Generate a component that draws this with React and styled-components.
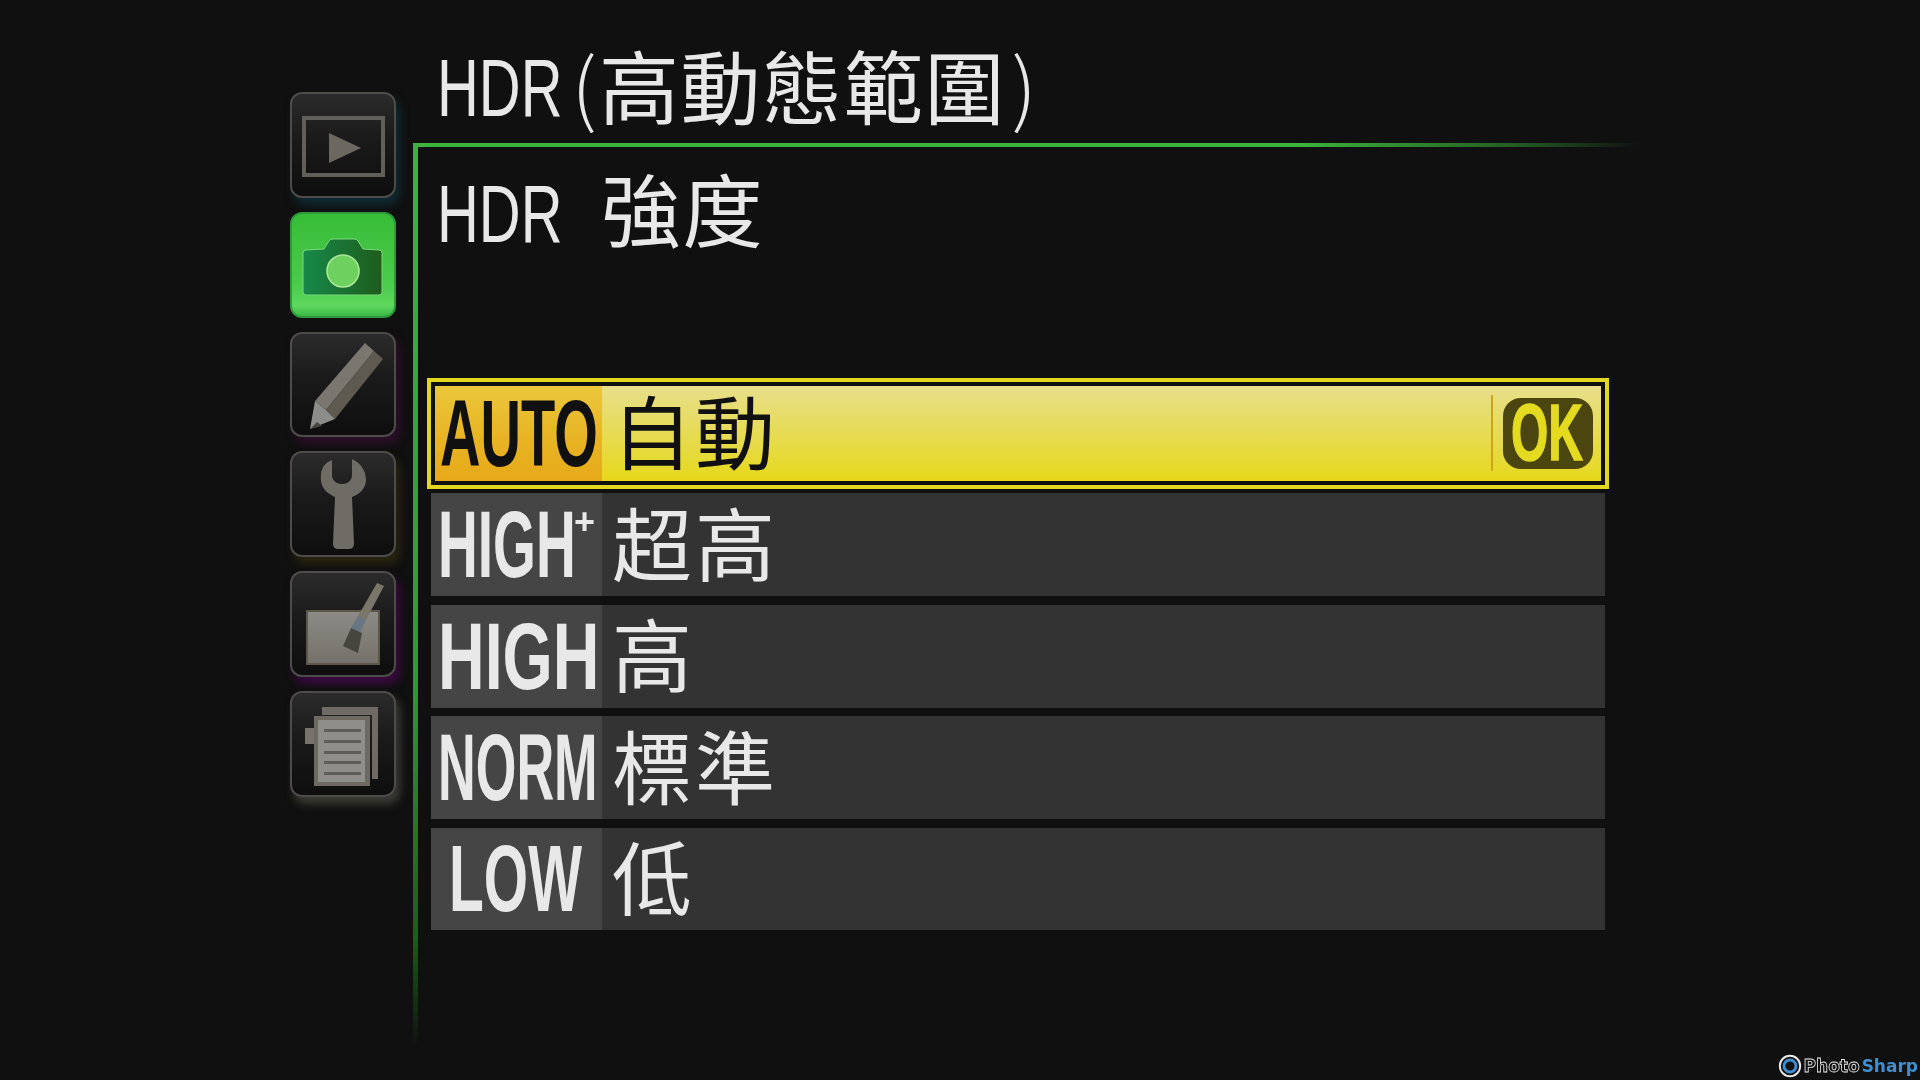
import React from 'react';
import styled, { createGlobalStyle } from 'styled-components';

const GlobalStyle = createGlobalStyle`
  html, body {
    margin: 0;
    padding: 0;
    background: #101010;
  }
`;

const Screen = styled.div`
  position: relative;
  width: 1920px;
  height: 1080px;
  overflow: hidden;
  display: flex;
  background: #101010;
  font-family: "Liberation Sans", "Noto Sans CJK TC", sans-serif;
  color: #e8e8e8;
  filter: blur(0.5px);
`;

const Sidebar = styled.div`
  display: flex;
  flex-direction: column;
  gap: 14px;
  width: 106px;
  margin-left: 290px;
  padding-top: 92px;
`;

const Tile = styled.div`
  box-sizing: border-box;
  width: 106px;
  height: 105.8px;
  border-radius: 12px;
  border: 2px solid ${p => (p.$active ? '#2f9a3c' : '#4e4c49')};
  background: ${p => (p.$active
    ? 'linear-gradient(to bottom, #38bd38 0%, #4ccb4c 70%, #5ed85e 90%, #3cb848 100%)'
    : 'linear-gradient(to bottom, #2b2b2b 0%, #1a1a1a 45%, #0e0e0e 100%)')};
  box-shadow: 4px 7px 8px ${p => p.$glow || 'transparent'};

  svg {
    display: block;
    width: 102px;
    height: 102px;
  }
`;

const Main = styled.div`
  display: flex;
  flex-direction: column;
  margin-left: 17px;
`;

const Heading = styled.div`
  display: flex;
  align-items: center;
  height: 143px;
  padding: 22px 0 0 24px;
  box-sizing: border-box;
`;

const Panel = styled.div`
  width: 1227px;
  height: 904px;
  box-sizing: border-box;
  padding: 0 0 0 18px;
  background:
    linear-gradient(to right, #3cb43c 0%, #3cb43c 72%, #245c24 90%, transparent 100%) top left / 100% 4px no-repeat,
    linear-gradient(to bottom, #3cb43c 0%, #2f9a2f 60%, #1c5c1c 88%, transparent 100%) top left / 5px 100% no-repeat;
`;

const SubHeading = styled.div`
  display: flex;
  align-items: center;
  height: 106px;
  padding: 19px 0 0 6px;
  box-sizing: border-box;
`;

const Latin = styled.span`
  display: inline-block;
  flex-shrink: 0;
  width: ${p => p.$width}px;
  font-size: ${p => p.$size || 81}px;
  font-weight: ${p => p.$weight || 400};
  line-height: 1;
  white-space: nowrap;
  transform: translateY(${p => p.$shift || 0}px) scaleX(${p => p.$scale});
  transform-origin: left center;
`;

const OkText = styled(Latin)`
  -webkit-text-stroke: 1.5px #e4da20;
`;

const Cjk = styled.span`
  font-family: "Noto Sans CJK TC", sans-serif;
  font-size: ${p => p.$size || 80}px;
  letter-spacing: ${p => p.$spacing || 0}px;
  line-height: 1;
  white-space: nowrap;
  font-weight: 400;
`;

const Paren = styled.span`
  flex-shrink: 0;
  width: 30px;
  margin-left: ${p => p.$offset || 0}px;
  text-align: center;
  font-family: "Noto Sans CJK TC", sans-serif;
  font-size: 80px;
  line-height: 1;
  font-weight: 300;
`;

const List = styled.div`
  display: flex;
  flex-direction: column;
  gap: 8.6px;
  width: 1174px;
  margin-top: 133px;
`;

const Row = styled.div`
  position: relative;
  display: flex;
  align-items: center;
  height: 102.8px;
  background: ${p => (p.$selected
    ? 'linear-gradient(to bottom, #e8df90 0%, #e6dc60 40%, #e6d816 100%)'
    : '#333333')};
  color: ${p => (p.$selected ? '#101010' : '#e8e8e8')};
  box-shadow: ${p => (p.$selected ? 'inset 0 0 0 4px #101010, 0 0 0 4px #e2d820' : 'none')};
`;

const Tag = styled.div`
  display: flex;
  align-items: center;
  box-sizing: border-box;
  flex-shrink: 0;
  position: relative;
  width: 171px;
  height: 100%;
  padding-left: ${p => p.$pad}px;
  background: ${p => (p.$selected
    ? 'linear-gradient(to bottom, #ecc83c 0%, #e8b424 55%, #e6a818 100%)'
    : '#454545')};
  box-shadow: ${p => (p.$selected ? 'inset 4px 4px 0 #101010, inset 0 -4px 0 #101010' : 'none')};
`;

const Plus = styled.span`
  position: absolute;
  left: 143px;
  top: 11px;
  font-size: 36px;
  font-weight: 700;
  line-height: 1;
`;

const RowLabel = styled.div`
  display: flex;
  align-items: center;
  flex: 1;
  height: 100%;
  padding: 0 0 10px 10px;
  box-sizing: border-box;
`;

const OkWrap = styled.div`
  display: flex;
  align-items: center;
  gap: 10px;
  height: 100%;
  padding-right: 12px;
`;

const Divider = styled.div`
  width: 2px;
  height: 76px;
  background: #c9a616;
`;

const OkBadge = styled.div`
  display: flex;
  align-items: center;
  box-sizing: border-box;
  width: 90px;
  height: 71px;
  padding-left: 8px;
  border-radius: 18px;
  background: #4b4610;
  color: #e4da20;
`;

const Watermark = styled.div`
  position: absolute;
  right: 2px;
  bottom: 2px;
  display: flex;
  align-items: center;
  gap: 2px;
  font-family: "DejaVu Sans", sans-serif;
  font-size: 17px;
  font-weight: 700;
  line-height: 1;
`;

const MarkWord = styled.span`
  color: ${p => (p.$outlined ? '#111111' : p.$color)};
  -webkit-text-stroke: ${p => (p.$outlined ? '0.8px #e8e8e8' : '0')};
`;

const PlayIcon = () => (
  <svg viewBox="0 0 102 102">
    <rect x="12" y="24" width="79" height="57" fill="none" stroke="#625e58" strokeWidth="4" />
    <polygon points="37,39 69,54 37,69" fill="#6c6761" />
  </svg>
);

const CameraIcon = () => (
  <svg viewBox="0 0 102 102">
    <defs>
      <linearGradient id="camBody" x1="0" y1="0" x2="1" y2="0">
        <stop offset="0" stopColor="#16894a" />
        <stop offset="1" stopColor="#1f5c1c" />
      </linearGradient>
    </defs>
    <path
      d="M14 36 L32 35 L37 27 Q38 25 41 25 L62 25 Q65 25 66 27 L71 35 L87 36 Q90 36 90 39 L90 78 Q90 81 87 81 L14 81 Q11 81 11 78 L11 39 Q11 36 14 36 Z"
      fill="url(#camBody)"
      stroke="#79d878"
      strokeWidth="1"
    />
    <circle cx="51" cy="57" r="16" fill="#6ed05e" stroke="#a9e898" strokeWidth="1.6" />
  </svg>
);

const PencilIcon = () => (
  <svg viewBox="0 0 102 102">
    <polygon points="23,67 73,9 82,17 34,76" fill="#7b766f" />
    <polygon points="34,76 82,17 91,25 43,85" fill="#5f5a50" />
    <polygon points="23,67 34,76 43,85 18,95" fill="#8c8c8a" />
    <polygon points="25,88 30,92 18,95" fill="#4a4640" />
  </svg>
);

const WrenchIcon = () => (
  <svg viewBox="0 0 102 102">
    <path
      d="M40 7 C31 10 28 18 29 28 C30 36 36 41 43 44 L41 90 Q41 96 46 96 L57 96 Q62 96 62 90 L60 44 C68 41 74 35 74 27 C74 18 69 10 60 6 L60 22 C60 28 55 31 50 31 C45 31 40 28 40 22 Z"
      fill="#6f6b65"
    />
  </svg>
);

const RetouchIcon = () => (
  <svg viewBox="0 0 102 102">
    <defs>
      <linearGradient id="canvasFill" x1="0" y1="0" x2="0" y2="1">
        <stop offset="0" stopColor="#8c8b85" />
        <stop offset="1" stopColor="#74716a" />
      </linearGradient>
    </defs>
    <rect x="15" y="38" width="72" height="53" fill="url(#canvasFill)" stroke="#5f564a" strokeWidth="2" />
    <polygon points="85,10 92,13 74,47 66,43" fill="#7b766a" />
    <polygon points="66,43 74,47 68,60 59,55" fill="#697684" />
    <polygon points="59,55 70,60 66,80 51,73" fill="#47453f" />
  </svg>
);

const RecentIcon = () => (
  <svg viewBox="0 0 102 102">
    <path d="M30 14 H86 V86 H80 V22 H30 Z" fill="#6f6b64" />
    <rect x="13" y="35" width="12" height="16" fill="#77736c" />
    <rect x="22" y="23" width="56" height="70" fill="#6e6a62" />
    <rect x="26" y="27" width="47" height="62" fill="#8f8e8a" />
    {[36, 47, 58, 68, 79].map(y => (
      <rect key={y} x="32" y={y} width="37" height="3" fill="#5f5e56" />
    ))}
  </svg>
);

const tiles = [
  { icon: <PlayIcon />, glow: '#0f2a33' },
  { icon: <CameraIcon />, active: true },
  { icon: <PencilIcon />, glow: '#2c0f2a' },
  { icon: <WrenchIcon />, glow: '#2a2510' },
  { icon: <RetouchIcon />, glow: '#3a0a40' },
  { icon: <RecentIcon />, glow: '#3c3c36' },
];

const options = [
  { tag: 'AUTO', label: '自動', pad: 9, scale: 0.59, width: 158, selected: true },
  { tag: 'HIGH', label: '超高', pad: 7, scale: 0.58, width: 140, plus: true },
  { tag: 'HIGH', label: '高', pad: 7, scale: 0.68, width: 160 },
  { tag: 'NORM', label: '標準', pad: 7, scale: 0.55, width: 160 },
  { tag: 'LOW', label: '低', pad: 18, scale: 0.6, width: 133 },
];

const App = () => {
  return (
    <Screen>
      <GlobalStyle />
      <Sidebar>
        {tiles.map((t, i) => (
          <Tile key={i} $active={t.active} $glow={t.glow}>{t.icon}</Tile>
        ))}
      </Sidebar>
      <Main>
        <Heading>
          <Latin $width={132} $scale={0.715} $shift={6}>HDR</Latin>
          <Paren>(</Paren>
          <Cjk $spacing={1.4}>高動態範圍</Cjk>
          <Paren $offset={3}>)</Paren>
        </Heading>
        <Panel>
          <SubHeading>
            <Latin $width={164} $scale={0.715} $shift={9}>HDR</Latin>
            <Cjk $spacing={1.4}>強度</Cjk>
          </SubHeading>
          <List>
            {options.map((o, i) => (
              <Row key={i} $selected={o.selected}>
                <Tag $selected={o.selected} $pad={o.pad}>
                  <Latin $size={95} $weight={700} $scale={o.scale} $width={o.width}>{o.tag}</Latin>
                  {o.plus && <Plus>+</Plus>}
                </Tag>
                <RowLabel>
                  <Cjk $spacing={3}>{o.label}</Cjk>
                </RowLabel>
                {o.selected && (
                  <OkWrap>
                    <Divider />
                    <OkBadge>
                      <OkText $size={80} $weight={700} $scale={0.6} $width={74}>OK</OkText>
                    </OkBadge>
                  </OkWrap>
                )}
              </Row>
            ))}
          </List>
        </Panel>
      </Main>
      <Watermark>
        <svg width="24" height="24" viewBox="0 0 20 20">
          <circle cx="10" cy="10" r="8.5" fill="#111" stroke="#e8e8e8" strokeWidth="1.6" />
          <circle cx="10" cy="10" r="5" fill="none" stroke="#3f8fd0" strokeWidth="2.4" />
        </svg>
        <MarkWord $outlined>Photo</MarkWord>
        <MarkWord $color="#3f8fd0">Sharp</MarkWord>
      </Watermark>
    </Screen>
  );
};

export default App;
